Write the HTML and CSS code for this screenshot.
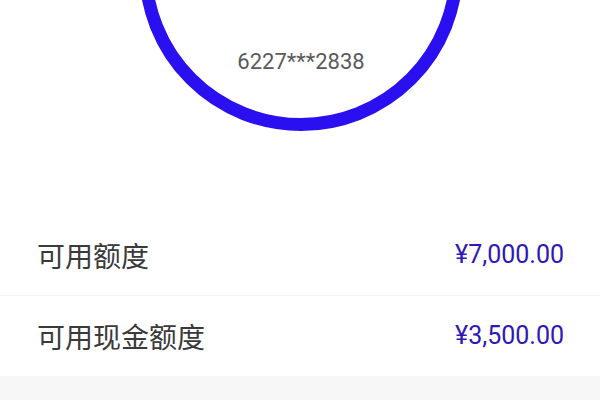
FILE: index.html
```html
<!DOCTYPE html>
<html lang="zh-CN">
<head>
<meta charset="utf-8">
<link rel="stylesheet" href="styles.css">
</head>
<body>
<div class="page">
  <section class="hero">
    <div class="ring">
      <span class="card-no">6227***2838</span>
    </div>
  </section>
  <section class="list">
    <div class="row">
      <span class="label">可用额度</span>
      <span class="amount">¥7,000.00</span>
    </div>
    <div class="row">
      <span class="label">可用现金额度</span>
      <span class="amount">¥3,500.00</span>
    </div>
  </section>
  <div class="footer"></div>
</div>
</body>
</html>
```
FILE: styles.css
```css
html, body {
  margin: 0;
  padding: 0;
  background: #ffffff;
}
body {
  font-family: Roboto, "Noto Sans CJK SC", sans-serif;
  width: 600px;
  height: 400px;
  overflow: hidden;
}
.page {
  display: flex;
  flex-direction: column;
  height: 400px;
}
.hero {
  height: 215px;
  display: flex;
  justify-content: center;
  overflow: hidden;
  flex: none;
}
.ring {
  box-sizing: border-box;
  width: 324px;
  height: 324px;
  margin-top: -193px;
  margin-left: 2px;
  border: 13px solid #2a0ff0;
  border-radius: 50%;
  display: flex;
  flex-direction: column;
  justify-content: flex-end;
  align-items: center;
  padding-bottom: 43px;
  flex: none;
}
.card-no {
  font-family: Roboto, sans-serif;
  font-size: 22px;
  color: #5a5a5a;
  line-height: 26px;
}
.list {
  display: flex;
  flex-direction: column;
  flex: none;
}
.row {
  height: 80px;
  display: flex;
  align-items: center;
  justify-content: space-between;
  padding: 0 36px 0 37px;
}
.row + .row {
  border-top: 1px solid #f4f4f4;
}
.label {
  font-family: "Noto Sans CJK SC", sans-serif;
  font-size: 28px;
  color: #3a3a3a;
  line-height: 32px;
}
.amount {
  font-family: Roboto, sans-serif;
  font-size: 25px;
  color: #2f17b8;
  line-height: 30px;
}
.footer {
  flex: 1;
  background: #f7f7f7;
}
```
